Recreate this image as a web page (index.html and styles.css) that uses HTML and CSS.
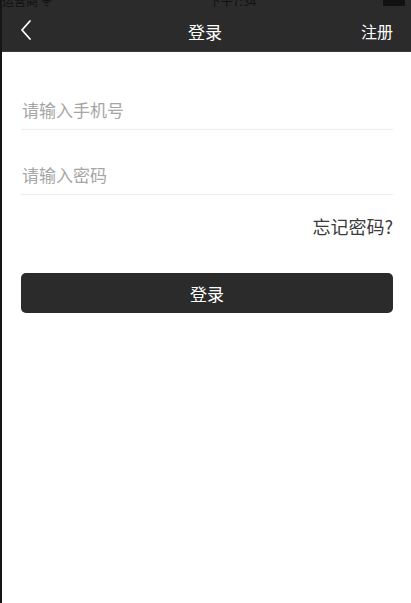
FILE: index.html
```html
<!DOCTYPE html>
<html lang="zh-CN">
<head>
<meta charset="utf-8">
<title>登录</title>
<link rel="stylesheet" href="styles.css">
</head>
<body>
<div class="page">
  <div class="status">
    <div class="status-row">
      <span class="carrier">运营商 ᯤ</span>
      <span class="time">下午7:34</span>
      <span class="battery"></span>
    </div>
  </div>
  <header class="nav">
    <span class="back">
      <svg width="14" height="22" viewBox="0 0 14 22"><path d="M11 2 L3 11 L11 20" fill="none" stroke="#fff" stroke-width="1.8" stroke-linecap="round" stroke-linejoin="round"/></svg>
    </span>
    <span class="title">登录</span>
    <span class="register">注册</span>
  </header>
  <main class="form">
    <label class="field"><input type="text" placeholder="请输入手机号"></label>
    <label class="field"><input type="password" placeholder="请输入密码"></label>
    <div class="forgot">忘记密码?</div>
    <button class="submit" type="button">登录</button>
  </main>
</div>
</body>
</html>
```
FILE: styles.css
```css
* { box-sizing: border-box; }
html, body { margin: 0; padding: 0; background: #fff; }
body { font-family: "Noto Sans CJK SC", "Noto Sans", sans-serif; }
.page {
  width: 411px;
  height: 603px;
  border-left: 2px solid #151515;
  background: #fff;
  overflow: hidden;
}
.status {
  height: 7px;
  background: #2b2b2b;
  overflow: hidden;
}
.status-row {
  display: flex;
  justify-content: space-between;
  align-items: flex-end;
  height: 7px;
  padding: 0 6px 0 0;
  font-size: 12px;
  line-height: 12px;
  color: #111;
}
.status-row span { margin-top: -6px; }
.carrier { width: 80px; }
.time { width: 80px; text-align: center; }
.battery {
  width: 22px;
  height: 14px;
  background: #111;
  display: block;
  align-self: flex-start;
  margin-top: -8px !important;
}
.nav {
  height: 45px;
  background: #2b2b2b;
  border-bottom: 1px solid #3a3a3a;
  display: flex;
  align-items: center;
  justify-content: space-between;
  padding: 0 18px 0 17px;
  color: #fff;
}
.back { width: 40px; display: flex; align-items: center; padding-top: 1px; }
.title { font-size: 17px; padding-top: 4px; margin-right: 2px; }
.register { width: 40px; text-align: right; font-size: 16px; padding-top: 4px; }
.form {
  padding: 13px 18px 0 19px;
  display: flex;
  flex-direction: column;
}
.field {
  display: flex;
  align-items: flex-end;
  height: 65px;
  border-bottom: 1px solid #ececec;
  padding-bottom: 7px;
}
.field input {
  width: 100%;
  border: 0;
  outline: 0;
  padding: 0 0 0 1px;
  margin: 0;
  height: 24px;
  line-height: 24px;
  font-family: inherit;
  font-size: 17px;
  color: #333;
  background: transparent;
}
.field input::placeholder { color: #a6a6a6; }
.forgot {
  margin-top: 19px;
  text-align: right;
  font-size: 18px;
  line-height: 24px;
  color: #3a3a3a;
}
.submit {
  margin-top: 35px;
  height: 40px;
  border: 0;
  border-radius: 5px;
  background: #2b2b2b;
  color: #fff;
  font-family: inherit;
  font-size: 17px;
  padding: 0;
}
```
